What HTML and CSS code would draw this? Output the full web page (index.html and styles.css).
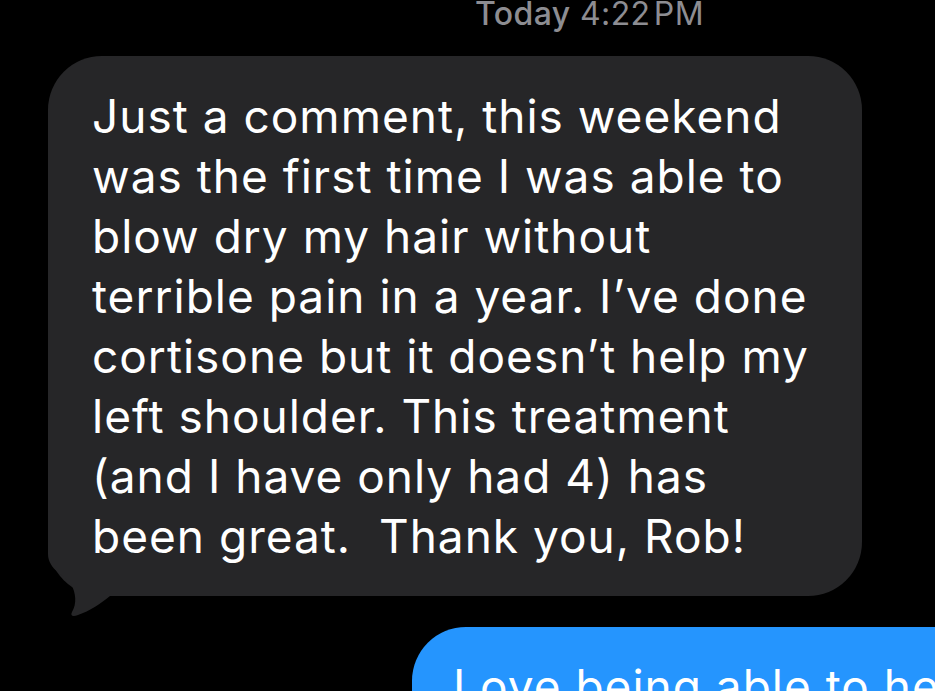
FILE: index.html
```html
<!DOCTYPE html>
<html lang="en">
<head>
    <meta charset="UTF-8">
    <meta name="viewport" content="width=device-width, initial-scale=1.0">
    <title>Messages</title>
    <link rel="stylesheet" href="styles.css">
</head>
<body>
    <main class="thread">
        <div class="stamp"><span class="stamp-day">Today</span> 4:22&#8202;PM</div>

        <div class="msg incoming">
            <svg class="tail" viewBox="0 0 70 82" width="70" height="82" aria-hidden="true">
                <path d="M0 0 L0 18 C0 34 18 40 23 48 C28 57 29 68 24 76 C22 80 25 81 30 79 C42 75 52 68 62 60 L70 60 L70 0 Z" fill="#262628"/>
            </svg>
            <p class="msg-text">Just a comment, this weekend<br>was the first time I was able to<br>blow dry my hair without<br>terrible pain in a year. I’ve done<br>cortisone but it doesn’t help my<br>left shoulder. This treatment<br>(and I have only had 4) has<br>been great.&nbsp; Thank you, Rob!</p>
        </div>

        <div class="msg outgoing">
            <p class="msg-text">Love being able to help you feel better!</p>
        </div>
    </main>
</body>
</html>
```

FILE: styles.css
```css
html, body {
    margin: 0;
    padding: 0;
    background-color: #000;
    overflow: hidden;
}

body {
    font-family: Inter, "Noto Sans", sans-serif;
    color: #fff;
    -webkit-font-smoothing: antialiased;
}

.thread {
    display: flex;
    flex-direction: column;
    align-items: flex-start;
}

.stamp {
    padding: 1px 0 0 475px;
    font-size: 32px;
    line-height: 26px;
    letter-spacing: 0.4px;
    color: #8d8d92;
    white-space: nowrap;
}

.stamp-day {
    font-weight: 500;
}

.msg {
    position: relative;
    box-sizing: border-box;
    border-radius: 54px;
}

.msg-text {
    position: relative;
    margin: 0;
    font-size: 46px;
    line-height: 60px;
    letter-spacing: 1px;
    white-space: nowrap;
}

.incoming {
    margin: 29px 0 0 48px;
    width: 814px;
    padding: 30px 44px;
    background-color: #262628;
}

.incoming .tail {
    position: absolute;
    left: 0;
    top: 480px;
}

.outgoing {
    margin: 31px 0 0 412px;
    width: 700px;
    padding: 29px 41px;
    background-color: #2595fe;
}
```
